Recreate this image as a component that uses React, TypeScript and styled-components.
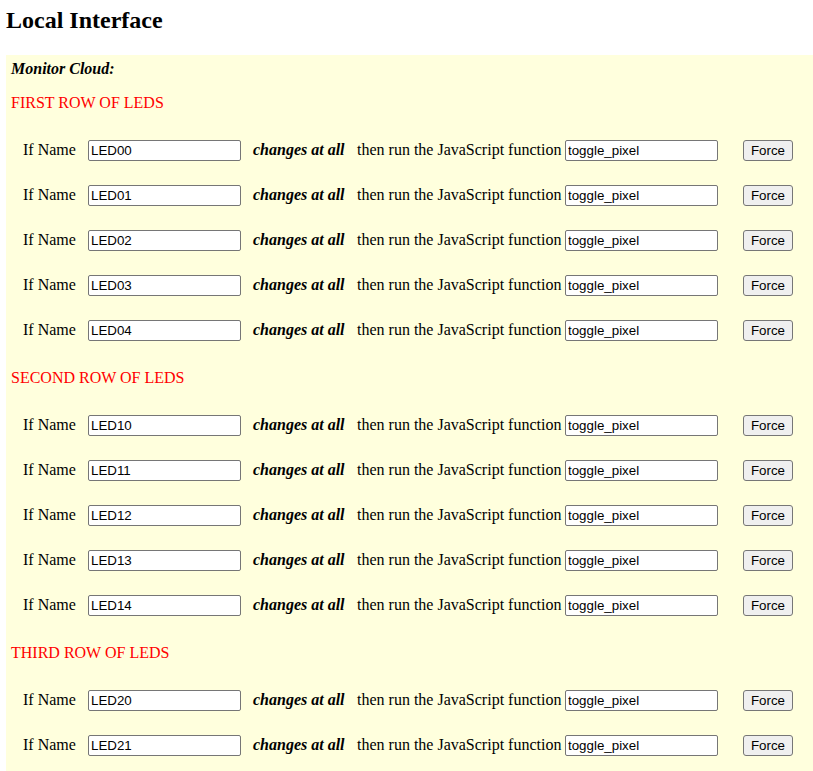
import React from "react";
import styled, { createGlobalStyle } from "styled-components";

const GlobalStyle = createGlobalStyle`
  html, body { margin: 0; padding: 0; background: #ffffff; }
  body {
    font-family: "Liberation Serif", "Times New Roman", serif;
    font-size: 16px;
    color: #000000;
  }
`;

const Page = styled.div`
  padding: 6px 0 0 6px;
`;

const Title = styled.h2`
  margin: 0 0 21px;
  font-size: 24px;
  line-height: 28px;
  font-weight: bold;
`;

const Panel = styled.div`
  background: #ffffdd;
  padding: 5px 0 20px 5px;
`;

const PanelTitle = styled.div`
  font-weight: bold;
  font-style: italic;
  line-height: 18px;
`;

const Section = styled.section`
  margin-top: 16px;
`;

const SectionHeader = styled.div`
  color: #ff0000;
  line-height: 18px;
  margin-bottom: 16px;
`;

const Row = styled.div`
  display: grid;
  grid-template-columns: 65px 165px 104px 208px 178px 50px;
  align-items: baseline;
  align-content: center;
  height: 45px;
  padding-left: 12px;
`;

const Label = styled.span<{ $strong?: boolean }>`
  white-space: nowrap;
  line-height: 18px;
  font-weight: ${(p) => (p.$strong ? "bold" : "normal")};
  font-style: ${(p) => (p.$strong ? "italic" : "normal")};
`;

const TextInput = styled.input`
  box-sizing: border-box;
  width: 153px;
  height: 21px;
  margin: 0;
  padding: 1px 2px;
  border: 1px solid #767676;
  border-radius: 2px;
  background: #ffffff;
  font-family: "Liberation Sans", Arial, sans-serif;
  font-size: 13.333px;
  color: #000000;
  outline: none;
`;

const ForceButton = styled.button`
  box-sizing: border-box;
  width: 50px;
  height: 21px;
  margin: 0;
  padding: 1px 6px;
  border: 1px solid #767676;
  border-radius: 3px;
  background: #efefef;
  font-family: "Liberation Sans", Arial, sans-serif;
  font-size: 13.333px;
  color: #000000;
  cursor: pointer;
`;

const sections = [
  { title: "FIRST ROW OF LEDS", leds: ["LED00", "LED01", "LED02", "LED03", "LED04"] },
  { title: "SECOND ROW OF LEDS", leds: ["LED10", "LED11", "LED12", "LED13", "LED14"] },
  { title: "THIRD ROW OF LEDS", leds: ["LED20", "LED21"] },
];

function LedRow({ name }: { name: string }) {
  return (
    <Row>
      <Label>If Name</Label>
      <TextInput type="text" defaultValue={name} />
      <Label $strong>changes at all</Label>
      <Label>then run the JavaScript function</Label>
      <TextInput type="text" defaultValue="toggle_pixel" />
      <ForceButton type="button">Force</ForceButton>
    </Row>
  );
}

export default function App() {
  return (
    <>
      <GlobalStyle />
      <Page>
        <Title>Local Interface</Title>
        <Panel>
          <PanelTitle>Monitor Cloud:</PanelTitle>
          {sections.map((s) => (
            <Section key={s.title}>
              <SectionHeader>{s.title}</SectionHeader>
              {s.leds.map((led) => (
                <LedRow key={led} name={led} />
              ))}
            </Section>
          ))}
        </Panel>
      </Page>
    </>
  );
}
